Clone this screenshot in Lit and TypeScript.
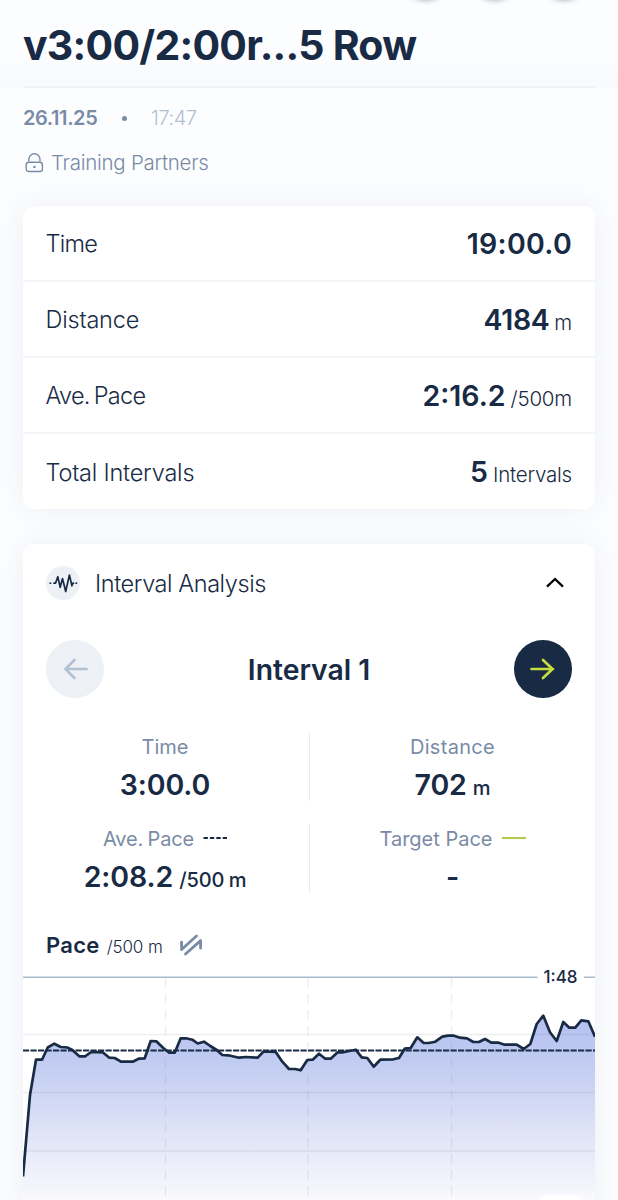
import { LitElement, html, svg, css } from 'lit';
import { customElement, property } from 'lit/decorators.js';

const summary = [
  { label: 'Time', value: '19:00.0', unit: '', cls: 'time' },
  { label: 'Distance', value: '4184', unit: 'm', cls: 'distance' },
  { label: 'Ave. Pace', value: '2:16.2', unit: '/500m', cls: 'pace' },
  { label: 'Total Intervals', value: '5', unit: 'Intervals', cls: 'total' },
];

const pacePoints: [number, number][] = [
  [0, 216.5], [7, 135], [13, 99.7], [19, 99.7], [24.7, 87.5], [31.3, 83.7], [37.7, 87], [44.3, 87.5],
  [49.3, 90], [56.3, 96.3], [62, 96.3], [68.3, 92], [79.7, 92.3], [86.3, 97.7], [91.7, 98], [98, 101.7],
  [109.7, 101.7], [115.7, 98.7], [121.7, 98.3], [127.7, 81], [133.3, 81.3], [140.3, 88], [146.3, 92.7],
  [151.7, 92.7], [157.7, 78.3], [163, 78.3], [169.3, 79.7], [174.7, 83.5], [181, 81.7], [187.3, 86],
  [193.7, 90], [199.3, 95], [205.3, 95.3], [216, 97.7], [223, 97], [234.7, 97.7], [240.7, 91.3],
  [252.7, 92], [259.3, 101.7], [266, 109], [272, 109], [277.7, 110.3], [284.3, 100], [289.7, 99.7],
  [296, 93.7], [302.3, 98.7], [307.7, 98.7], [314.7, 92.3], [320.3, 92.3], [332.7, 89.7], [338.7, 97.3],
  [344.3, 98], [350.7, 106.7], [357.3, 99.7], [370.3, 99.3], [376, 98], [381.7, 88.7], [387.7, 88],
  [394.3, 77.3], [400.7, 83], [405.7, 83], [412.3, 81.7], [419.3, 76.7], [425, 75.7], [431, 75.7],
  [437, 77.7], [444, 78.3], [450.3, 82], [456, 82], [462, 79], [468.3, 82.7], [475.7, 82.7],
  [481.7, 84.7], [493.7, 84.7], [500.7, 89], [507.3, 84], [513.7, 64], [520.3, 55.7], [527, 72.3],
  [533.7, 81], [540.3, 62], [546.3, 67.7], [552.3, 67.7], [558.3, 60.3], [565.3, 61.3], [572, 76.7],
];

@customElement('pace-chart')
export class PaceChart extends LitElement {
  static styles = css`
    :host {
      display: block;
    }

    svg {
      display: block;
    }

    .grid {
      stroke: #5f7490;
      stroke-opacity: 0.12;
      stroke-width: 1.3;
    }

    .grid--dashed {
      stroke-dasharray: 10 6;
    }

    .limit {
      stroke: #a9bccd;
      stroke-width: 1.4;
    }

    .average {
      stroke: #182a44;
      stroke-width: 2;
      stroke-dasharray: 6.2 1.3;
    }

    .line {
      fill: none;
      stroke: #182a44;
      stroke-width: 2.7;
      stroke-linejoin: round;
    }

    .limit-label {
      font: 500 17px Inter, sans-serif;
      fill: #182a44;
    }
  `;

  @property({ attribute: false }) points: [number, number][] = [];

  render() {
    const line = this.points.map(([x, y]) => `${x},${y}`).join(' ');

    return html`
      <svg width="572" height="242" viewBox="0 0 572 242">
        <defs>
          <linearGradient id="fill" gradientUnits="userSpaceOnUse" x1="0" y1="55" x2="0" y2="244">
            <stop offset="0" stop-color="#b3bff0" />
            <stop offset="0.3" stop-color="#c5cff2" />
            <stop offset="0.62" stop-color="#dfe3f6" />
            <stop offset="1" stop-color="#fbfbfe" />
          </linearGradient>
        </defs>
        <polygon points="0,242 ${line} 572,242" fill="url(#fill)" />
        ${[74.5, 132.5, 191].map((y) => svg`<line class="grid" x1="0" y1=${y} x2="572" y2=${y} />`)}
        ${[142.5, 285.2, 428.5].map(
          (x) => svg`<line class="grid grid--dashed" x1=${x} y1="18" x2=${x} y2="242" />`
        )}
        <path class="limit" d="M0 17.2H514.5M561 17.2H572" />
        <line class="average" x1="0" y1="90.5" x2="572" y2="90.5" />
        <polyline class="line" points=${line} />
        <rect x="516" y="235.5" width="43" height="16" rx="5" fill="#fff" />
        <text class="limit-label" x="520.5" y="22.6" textLength="34">1:48</text>
      </svg>
    `;
  }
}

@customElement('app-root')
export class AppRoot extends LitElement {
  static styles = css`
    :host {
      display: block;
      height: 1200px;
      overflow: hidden;
      background: #fcfdff;
      color: #182a44;
      font-family: Inter, sans-serif;
      line-height: 1;
    }

    * {
      box-sizing: border-box;
    }

    /* Header */
    .header {
      height: 88px;
      padding: 0 23px;
      overflow: hidden;
      background: linear-gradient(#fcfdff 60%, #f9fafc);
    }

    .actions {
      display: flex;
      justify-content: flex-end;
      gap: 23px;
      height: 0;
      padding-right: 8px;
    }

    .action {
      width: 46px;
      height: 46px;
      margin-top: -48px;
      border-radius: 50%;
      background: #fff;
      box-shadow: 0 1px 6px rgba(20, 24, 32, 0.55);
    }

    .title {
      height: 88px;
      margin: 0;
      padding-top: 25px;
      border-bottom: 2px solid #f0f2f4;
      font-size: 41px;
      font-weight: 700;
      letter-spacing: -0.75px;
      line-height: 41px;
      white-space: nowrap;
    }

    /* Date and visibility */
    .meta {
      display: flex;
      flex-direction: column;
      height: 118px;
      padding: 19px 23px 0;
      color: #7a8ba5;
    }

    .when {
      display: flex;
      align-items: center;
      height: 22px;
      font-size: 20px;
      letter-spacing: -0.4px;
    }

    .date {
      width: 99px;
      font-weight: 600;
    }

    .dot {
      width: 5px;
      height: 5px;
      margin-right: 24px;
      border-radius: 50%;
      background: #7a8ba5;
    }

    .clock {
      color: #b3bfcf;
      font-weight: 300;
    }

    .visibility {
      display: flex;
      align-items: center;
      gap: 7px;
      height: 24px;
      margin-top: 22px;
      padding-left: 2px;
      font-size: 20.5px;
      font-weight: 300;
      letter-spacing: -0.27px;
    }

    /* Cards */
    .card {
      margin: 0 23px;
      border-radius: 11px;
      background: #fff;
      box-shadow: 0 0 30px rgba(40, 55, 80, 0.07);
    }

    .row {
      display: flex;
      align-items: center;
      justify-content: space-between;
      height: 76.1px;
      padding: 2px 23px 0;
      border-bottom: 2px solid #f3f5f8;
    }

    .row:last-child {
      height: 74.5px;
      border-bottom: 0;
    }

    .row-label {
      margin-left: -0.5px;
      font-size: 23.5px;
      font-weight: 350;
      letter-spacing: -0.2px;
    }

    .row-label--time {
      letter-spacing: -0.7px;
    }

    .row-label--pace {
      letter-spacing: -0.7px;
      word-spacing: -2px;
    }

    .row-value {
      display: flex;
      align-items: baseline;
      gap: 5px;
      font-size: 28.5px;
      font-weight: 600;
    }

    .row-value--time {
      letter-spacing: 0.3px;
    }

    .row-value--distance {
      letter-spacing: -0.4px;
    }

    .row-unit {
      font-size: 20.5px;
      font-weight: 350;
      letter-spacing: -0.2px;
    }

    .analysis {
      height: 680px;
      margin-top: 35px;
    }

    .analysis-head {
      display: flex;
      align-items: center;
      height: 79px;
      padding: 0 23px;
      font-size: 23.5px;
      font-weight: 350;
      letter-spacing: -0.42px;
    }

    .badge {
      width: 34px;
      height: 34px;
      margin-right: 15px;
      border-radius: 50%;
      background: #edf1f6;
    }

    .chevron {
      margin-left: auto;
      margin-right: 7px;
    }

    .pager {
      display: flex;
      align-items: center;
      justify-content: space-between;
      height: 58px;
      margin-top: 17px;
      padding: 0 23px;
      font-size: 28.3px;
      font-weight: 600;
    }

    .pager-title {
      padding-top: 2px;
    }

    .pager-button {
      display: grid;
      place-items: center;
      width: 57.5px;
      height: 57.5px;
      padding: 0;
      border: 0;
      border-radius: 50%;
      background: #182a44;
      color: #c7dc3f;
    }

    .pager-button:disabled {
      background: #edf1f5;
      color: #b3c1d4;
    }

    /* Interval stats */
    .stats {
      display: grid;
      grid-template-columns: 1fr 1fr;
      row-gap: 23px;
      margin-top: 35px;
    }

    .stat {
      display: flex;
      flex-direction: column;
      align-items: center;
      height: 68.5px;
      padding-top: 4px;
    }

    .stat:nth-child(odd) {
      padding-right: 2px;
    }

    .stat:nth-child(even) {
      border-left: 1px solid #e7ebef;
    }

    .stat:nth-child(n + 3) {
      padding-top: 5px;
    }

    .stat-label {
      display: flex;
      align-items: center;
      gap: 9px;
      height: 20px;
      color: #7a8ba5;
      font-size: 20px;
    }

    .stat-label--distance {
      letter-spacing: 0.3px;
    }

    .stat-label--average {
      letter-spacing: -0.15px;
      word-spacing: -1px;
    }

    .stat-value {
      display: flex;
      align-items: baseline;
      gap: 6px;
      margin-top: 14px;
      font-size: 28.5px;
      font-weight: 600;
      letter-spacing: -0.1px;
    }

    .stat-unit {
      font-size: 20px;
      font-weight: 500;
      letter-spacing: -0.1px;
      word-spacing: -1px;
    }

    .chart-head {
      display: flex;
      align-items: baseline;
      height: 24px;
      margin-top: 41px;
      padding: 0 23px;
      font-size: 22px;
      font-weight: 600;
    }

    .chart-name {
      letter-spacing: 0.3px;
    }

    .chart-unit {
      margin-left: 7px;
      font-size: 17px;
      font-weight: 350;
      letter-spacing: -0.1px;
    }

    .chart-icon {
      align-self: center;
      margin-left: 16px;
      margin-top: -2px;
    }

    pace-chart {
      margin-top: 2px;
    }
  `;

  render() {
    return html`
      <header class="header">
        <div class="actions">
          <div class="action"></div>
          <div class="action"></div>
          <div class="action"></div>
        </div>
        <h1 class="title">v3:00/2:00r...5 Row</h1>
      </header>

      <section class="meta">
        <div class="when">
          <span class="date">26.11.25</span>
          <span class="dot"></span>
          <span class="clock">17:47</span>
        </div>
        <div class="visibility">
          <svg width="19" height="20" viewBox="0 0 19 20" fill="none" stroke="currentColor" stroke-width="1.4">
            <path d="M3.8 8.5V6.4a5.6 5.6 0 0 1 11.2 0v2.1" />
            <rect x="1.2" y="9.3" width="16.2" height="9.2" rx="2.6" />
            <circle cx="9.4" cy="14" r="1.3" fill="currentColor" stroke="none" />
          </svg>
          <span class="partners">Training Partners</span>
        </div>
      </section>

      <section class="card">
        ${summary.map(
          (row) => html`
            <div class="row">
              <span class="row-label row-label--${row.cls}">${row.label}</span>
              <span class="row-value row-value--${row.cls}">
                <span>${row.value}</span>
                ${row.unit ? html`<span class="row-unit">${row.unit}</span>` : ''}
              </span>
            </div>
          `
        )}
      </section>

      <section class="card analysis">
        <div class="analysis-head">
          <svg class="badge" viewBox="0 0 34 34" fill="none" stroke="#182a44" stroke-width="1.7"
            stroke-linecap="round" stroke-linejoin="round">
            <path d="M8 17.2h1.5l2.3-6.5 2.4 10.6 2.3-8.8 3.2 13L23.4 9l2.5 10.8 1-2.6h.6" />
            <path d="M4.3 17.2h.2M30.2 17.2h.2" />
          </svg>
          <span class="analysis-title">Interval Analysis</span>
          <svg class="chevron" width="20" height="14" viewBox="0 0 20 14" fill="none" stroke="#000" stroke-width="2.3">
            <path d="M2 10.7 10 3l8 7.7" />
          </svg>
        </div>

        <div class="pager">
          <button class="pager-button" disabled>
            <svg width="26" height="22" viewBox="0 0 26 22" fill="none" stroke="currentColor" stroke-width="2.7"
              stroke-linecap="round" stroke-linejoin="round">
              <path d="M24.5 11H3.5M12.5 2l-9 9 9 9" />
            </svg>
          </button>
          <span class="pager-title">Interval 1</span>
          <button class="pager-button">
            <svg width="26" height="22" viewBox="0 0 26 22" fill="none" stroke="currentColor" stroke-width="2.7"
              stroke-linecap="round" stroke-linejoin="round">
              <path d="M1.5 11H23M13 2l9.5 9L13 20" />
            </svg>
          </button>
        </div>

        <div class="stats">
          <div class="stat">
            <span class="stat-label">Time</span>
            <span class="stat-value">3:00.0</span>
          </div>
          <div class="stat">
            <span class="stat-label stat-label--distance">Distance</span>
            <span class="stat-value">702 <span class="stat-unit">m</span></span>
          </div>
          <div class="stat">
            <span class="stat-label stat-label--average">
              Ave. Pace
              <svg width="24" height="4" viewBox="0 0 24 4">
                <path d="M0.5 1H24" stroke="#182a44" stroke-width="2" stroke-dasharray="4.4 2" />
              </svg>
            </span>
            <span class="stat-value">2:08.2 <span class="stat-unit">/500 m</span></span>
          </div>
          <div class="stat">
            <span class="stat-label">
              Target Pace
              <svg width="24" height="4" viewBox="0 0 24 4">
                <path d="M0 1H24" stroke="#b7c64f" stroke-width="2.2" />
              </svg>
            </span>
            <span class="stat-value">-</span>
          </div>
        </div>

        <div class="chart-head">
          <span class="chart-name">Pace</span>
          <span class="chart-unit">/500 m</span>
          <svg class="chart-icon" width="24" height="22" viewBox="0 0 24 22" fill="none" stroke="#7a8ba5"
            stroke-width="2.8" stroke-linecap="round" stroke-linejoin="round">
            <path d="M17.5 2 2.6 15.5V8.2" />
            <path d="M6.5 20 21.6 6.6v7.6" />
          </svg>
        </div>
        <pace-chart .points=${pacePoints}></pace-chart>
      </section>
    `;
  }
}
